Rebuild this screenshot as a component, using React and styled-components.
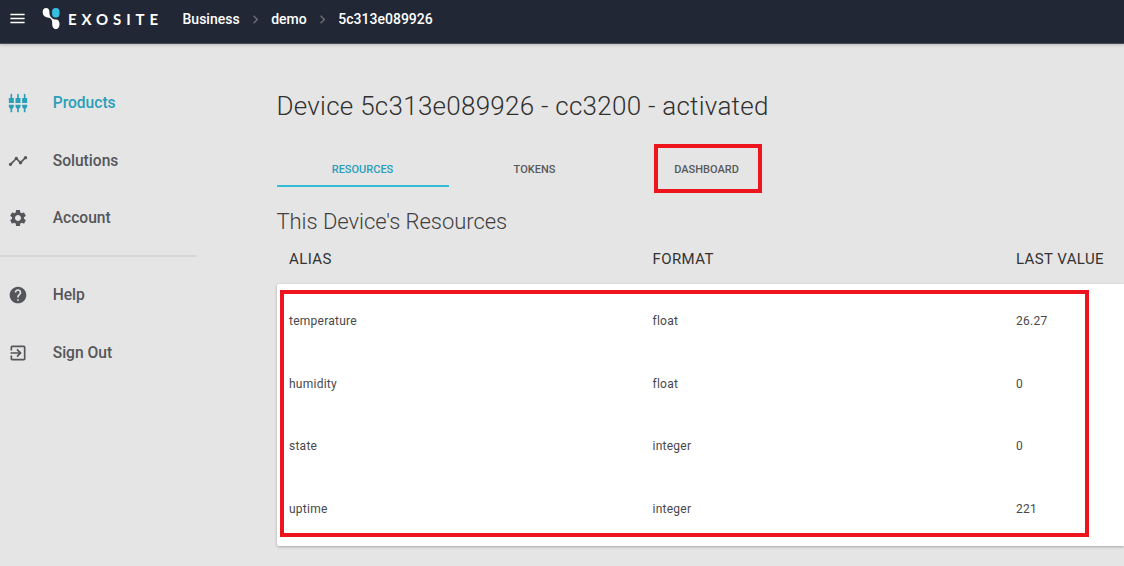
import React from "react";
import styled, { createGlobalStyle } from "styled-components";
import {
  MdMenu,
  MdSettingsInputComponent,
  MdTimeline,
  MdSettings,
  MdHelp,
  MdExitToApp,
  MdChevronRight,
} from "react-icons/md";

const GlobalStyle = createGlobalStyle`
  * { box-sizing: border-box; }
  body {
    margin: 0;
    overflow: hidden;
    background: #e5e5e5;
    font-family: Roboto, "Liberation Sans", sans-serif;
  }
`;

const Page = styled.div`
  height: 566px;
  display: flex;
  flex-direction: column;
  overflow: hidden;
`;

const Header = styled.header`
  flex: none;
  height: 44px;
  padding: 0 0 6px 8px;
  display: flex;
  align-items: center;
  background: #222735;
  border-bottom: 1px solid #4a4d57;
  box-shadow: 0 1px 3px rgba(0, 0, 0, 0.2);
  color: #fff;
`;

const MenuIcon = styled(MdMenu)`
  width: 19px;
  height: 19px;
  margin-right: 15px;
`;

const LogoMark = styled.svg`
  width: 19px;
  height: 24px;
  margin-top: 1px;
`;

const LogoText = styled.span`
  width: 114.5px;
  margin-left: 7px;
  font: 700 15px Lato, sans-serif;
  letter-spacing: 4.9px;
  line-height: 20px;
`;

const Crumb = styled.span`
  font-size: 14px;
  font-weight: 500;
  line-height: 20px;
`;

const CrumbArrow = styled(MdChevronRight)`
  width: 17px;
  height: 17px;
  margin: 1px 7.3px 0;
  color: #6b6d72;
`;

const Body = styled.div`
  flex: 1;
  display: flex;
`;

const Sidebar = styled.nav`
  flex: none;
  width: 196px;
  padding-top: 30.2px;
`;

const NavItem = styled.a`
  height: 57.6px;
  padding-left: 8px;
  display: flex;
  align-items: center;
  gap: 24.7px;
  color: ${(p) => (p.$active ? "#2a9fba" : "#55565a")};
  font-size: 15.6px;
  font-weight: 500;

  svg {
    width: 20px;
    height: 20px;
  }
`;

const Divider = styled.hr`
  height: 2px;
  margin: 8px 0 9.3px;
  border: 0;
  background: #d5d5d5;
`;

const Main = styled.main`
  flex: 1;
  min-width: 0;
  padding: 43px 0 0 80.5px;
`;

const Title = styled.h1`
  margin: 0;
  height: 38px;
  font-size: 26px;
  font-weight: 300;
  line-height: 38px;
  letter-spacing: 0.26px;
  color: #303030;
`;

const Tabs = styled.div`
  height: 38px;
  margin-top: 25px;
  display: flex;
`;

const Tab = styled.div`
  position: relative;
  width: 172px;
  height: 37.4px;
  border-bottom: 2px solid ${(p) => (p.$active ? "#35bdd8" : "transparent")};
  color: ${(p) => (p.$active ? "#2a9fba" : "#58595b")};
  font-size: 11px;
  font-weight: 500;
  line-height: 39px;
  text-align: center;
`;

const Highlight = styled.div`
  position: absolute;
  inset: ${(p) => p.$inset};
  border: 4px solid #ee141d;
  pointer-events: none;
`;

const Subtitle = styled.h2`
  margin: 18px 0 0;
  font-size: 22px;
  font-weight: 300;
  line-height: 32px;
  letter-spacing: -0.05px;
  color: #404040;
`;

const Row = styled.div`
  height: 62.6px;
  padding-left: 12.5px;
  display: grid;
  grid-template-columns: 363.5px 363.5px 1fr;
  align-items: center;
  font-size: 12px;
  letter-spacing: 0.25px;
  color: #48484a;
`;

const HeadRow = styled(Row)`
  height: 46px;
  padding-bottom: 4px;
  font-size: 15px;
  letter-spacing: 0.4px;
  color: #333;
`;

const Card = styled.section`
  position: relative;
  height: 262.4px;
  padding-top: 6px;
  background: #fff;
  border-radius: 2px 0 0 2px;
  box-shadow: 0 1px 3px rgba(0, 0, 0, 0.28);
`;

const resources = [
  ["temperature", "float", "26.27"],
  ["humidity", "float", "0"],
  ["state", "integer", "0"],
  ["uptime", "integer", "221"],
];

function Logo() {
  return (
    <LogoMark viewBox="0 0 19 24">
      <path
        d="M.7 4.800C.7 2.500 2 1 4.100 1S7.400 2.500 7.400 4.700C7.400 7.800 7.900 9.400 9.800 11 11.200 12.200 12.400 12.500 14 12.500 16.300 12.500 17.500 14.400 17.500 17.100 17.500 20.300 16.100 22.200 13.900 22.200S10.200 20.200 10.200 17.300C10.200 14.600 10.100 13 8.800 11.700 7.500 10.400 6.200 10.600 4.400 10.200 2.200 9.700.7 8 .7 4.800Z"
        fill="#fff"
      />
      <rect x="10.100" y="1" width="7.400" height="9.400" rx="3.500" fill="#36bfe0" />
    </LogoMark>
  );
}

export default function App() {
  return (
    <Page>
      <GlobalStyle />
      <Header>
        <MenuIcon />
        <Logo />
        <LogoText>EXOSITE</LogoText>
        <Crumb>Business</Crumb>
        <CrumbArrow />
        <Crumb>demo</Crumb>
        <CrumbArrow />
        <Crumb>5c313e089926</Crumb>
      </Header>
      <Body>
        <Sidebar>
          <NavItem $active><MdSettingsInputComponent />Products</NavItem>
          <NavItem><MdTimeline />Solutions</NavItem>
          <NavItem><MdSettings />Account</NavItem>
          <Divider />
          <NavItem><MdHelp />Help</NavItem>
          <NavItem><MdExitToApp />Sign Out</NavItem>
        </Sidebar>
        <Main>
          <Title>Device 5c313e089926 - cc3200 - activated</Title>
          <Tabs>
            <Tab $active>RESOURCES</Tab>
            <Tab>TOKENS</Tab>
            <Tab>
              DASHBOARD
              <Highlight $inset="-6px 30.5px -7.6px 33.5px" />
            </Tab>
          </Tabs>
          <Subtitle>This Device's Resources</Subtitle>
          <HeadRow>
            <span>ALIAS</span>
            <span>FORMAT</span>
            <span>LAST VALUE</span>
          </HeadRow>
          <Card>
            {resources.map(([alias, format, value]) => (
              <Row key={alias}>
                <span>{alias}</span>
                <span>{format}</span>
                <span>{value}</span>
              </Row>
            ))}
            <Highlight $inset="6px 35px 9.4px 3.5px" />
          </Card>
        </Main>
      </Body>
    </Page>
  );
}
